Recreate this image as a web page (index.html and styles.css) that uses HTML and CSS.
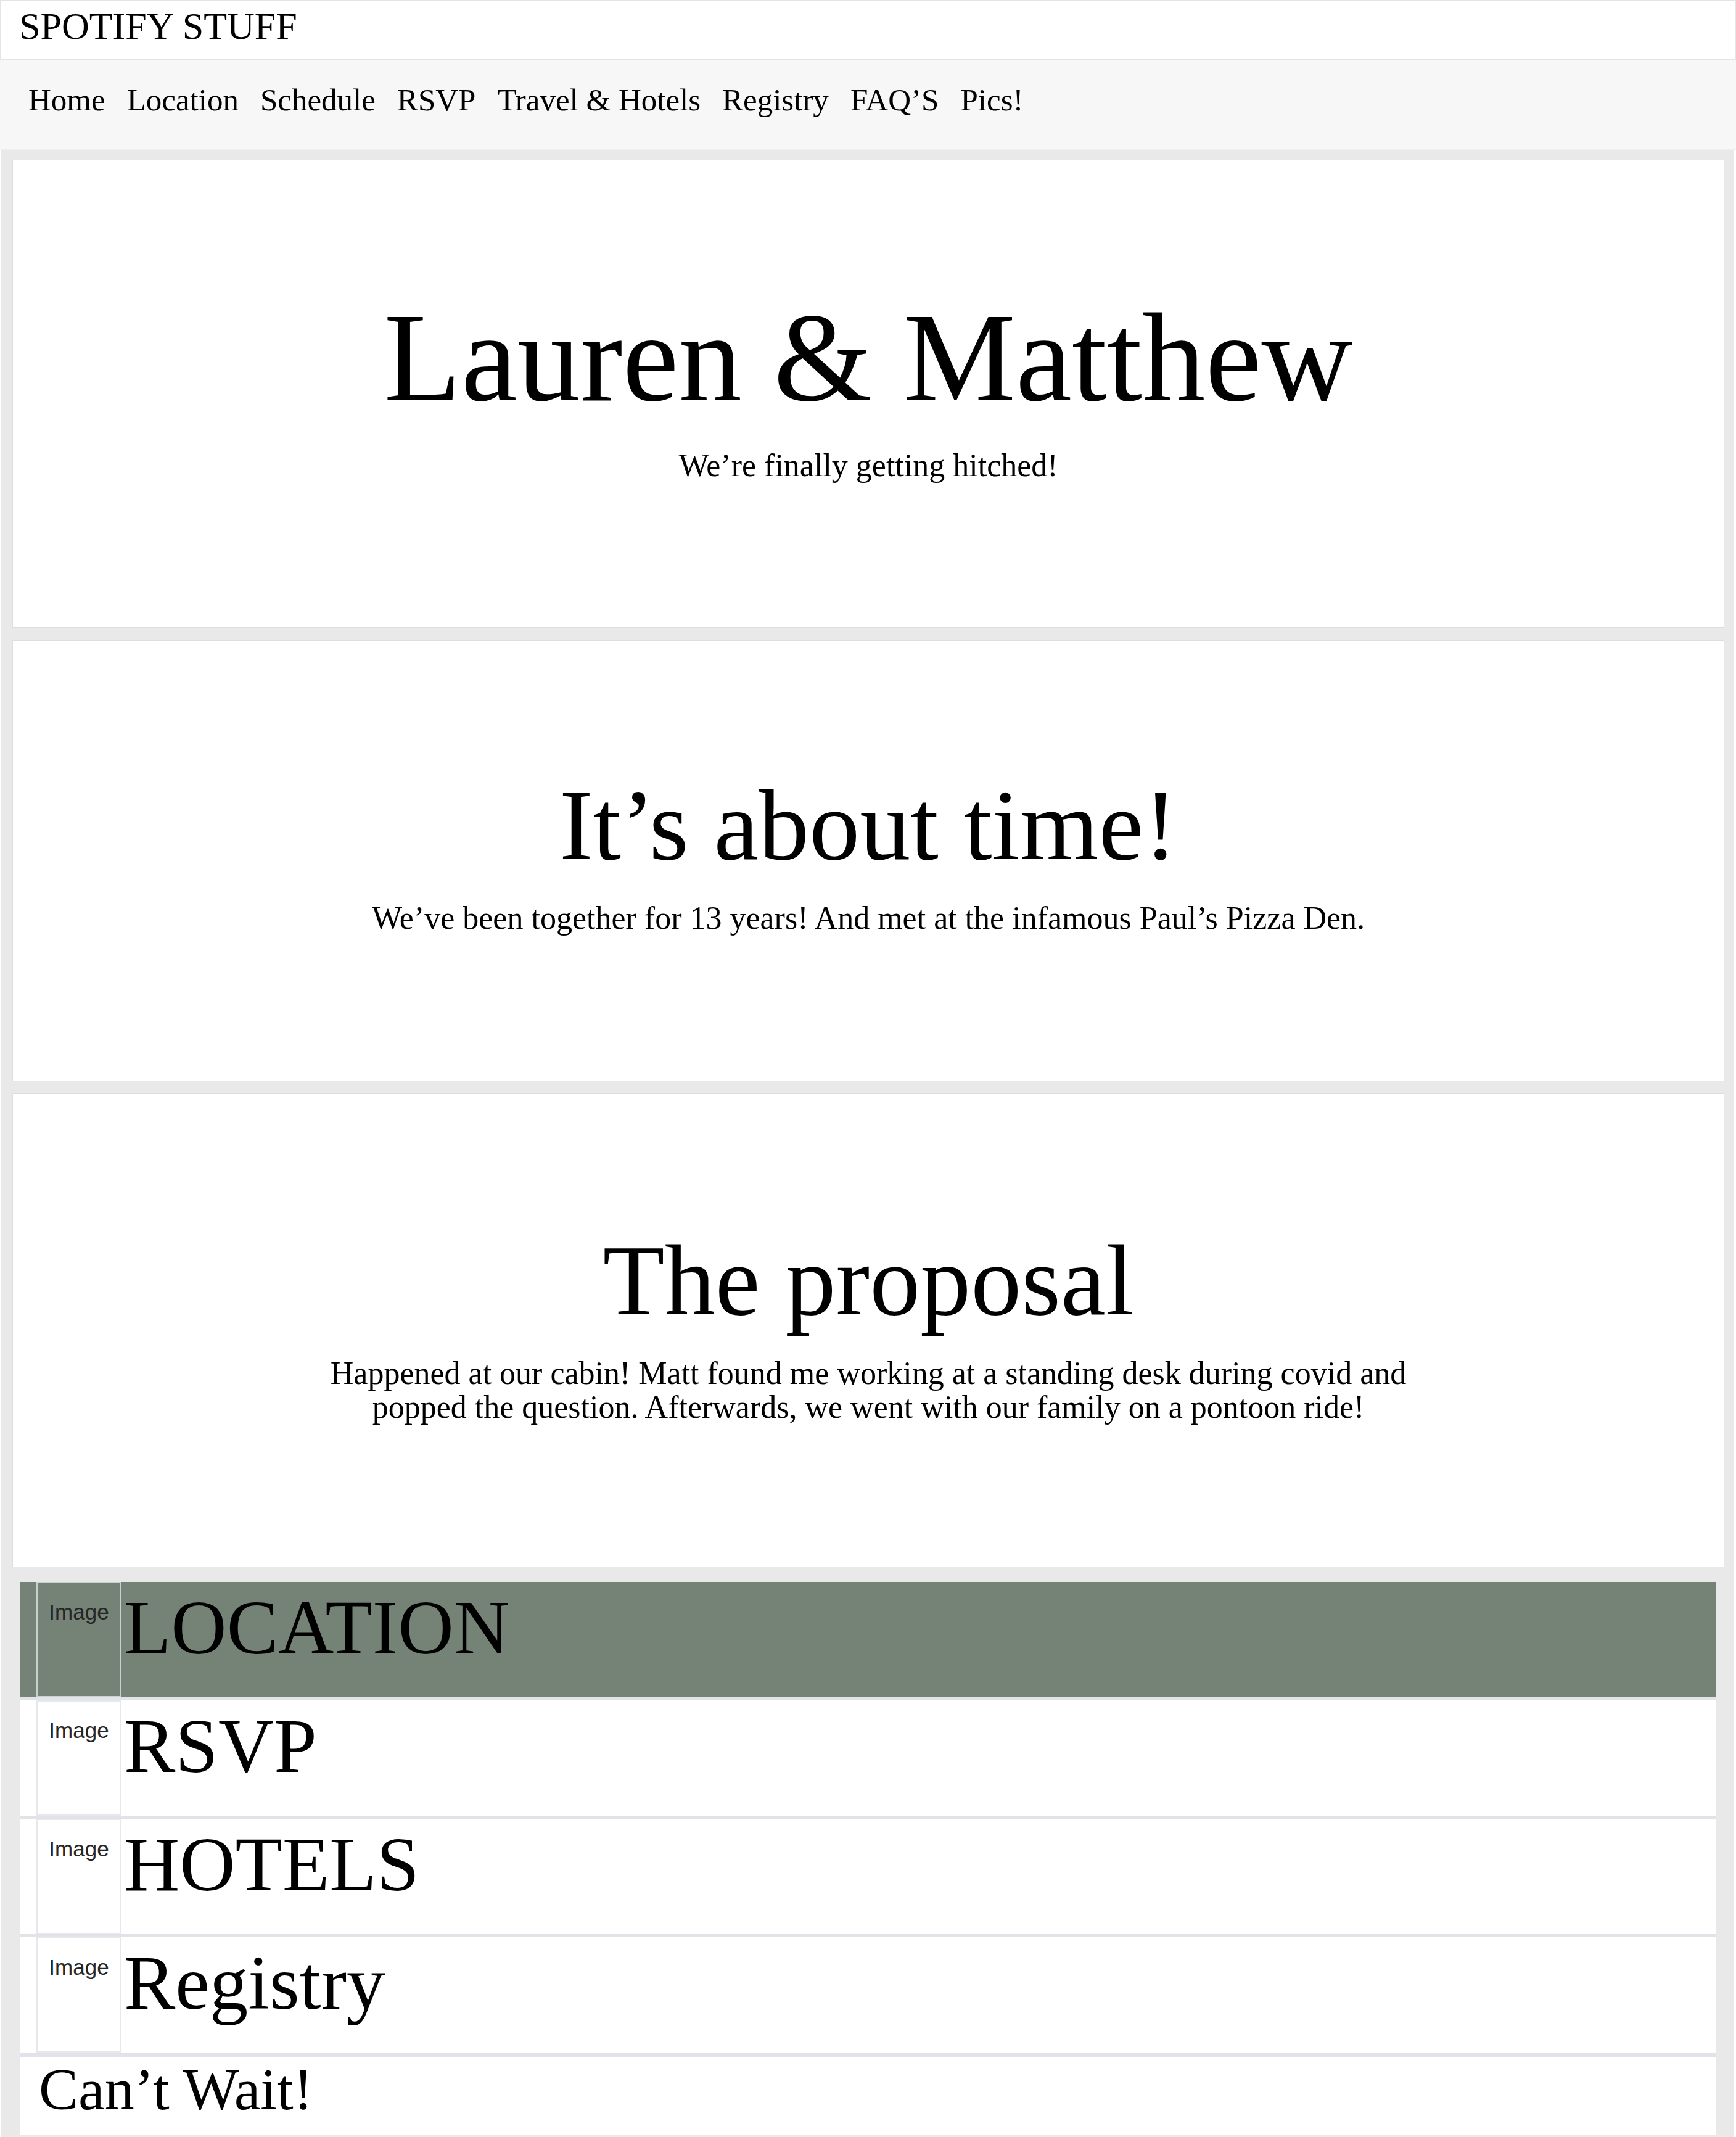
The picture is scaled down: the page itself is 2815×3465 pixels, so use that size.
FILE: index.html
```html
<!DOCTYPE html>
<html lang="en">
<head>
<meta charset="utf-8">
<title>Lauren &amp; Matthew</title>
<link rel="stylesheet" href="styles.css">
</head>
<body>
<header class="site-title">SPOTIFY STUFF</header>
<nav class="nav">
  <a class="nav-link" href="#">Home</a>
  <a class="nav-link" href="#">Location</a>
  <a class="nav-link" href="#">Schedule</a>
  <a class="nav-link" href="#">RSVP</a>
  <a class="nav-link" href="#">Travel &amp; Hotels</a>
  <a class="nav-link" href="#">Registry</a>
  <a class="nav-link" href="#">FAQ’S</a>
  <a class="nav-link" href="#">Pics!</a>
</nav>
<main class="page">
  <section class="card card-hero">
    <h1 class="hero-title">Lauren &amp; Matthew</h1>
    <p class="card-text">We’re finally getting hitched!</p>
  </section>
  <section class="card card-2">
    <h2 class="card-title">It’s about time!</h2>
    <p class="card-text">We’ve been together for 13 years! And met at the infamous Paul’s Pizza Den.</p>
  </section>
  <section class="card card-3">
    <h2 class="card-title">The proposal</h2>
    <p class="card-text narrow">Happened at our cabin! Matt found me working at a standing desk during covid and popped the question. Afterwards, we went with our family on a pontoon ride!</p>
  </section>
  <div class="list">
    <div class="row row-green">
      <div class="strip"></div>
      <div class="img-cell">Image</div>
      <div class="row-title">LOCATION</div>
    </div>
    <div class="row">
      <div class="strip"></div>
      <div class="img-cell">Image</div>
      <div class="row-title">RSVP</div>
    </div>
    <div class="row">
      <div class="strip"></div>
      <div class="img-cell">Image</div>
      <div class="row-title">HOTELS</div>
    </div>
    <div class="row">
      <div class="strip"></div>
      <div class="img-cell">Image</div>
      <div class="row-title">Registry</div>
    </div>
    <div class="footer-row">Can’t Wait!</div>
  </div>
</main>
</body>
</html>
```
FILE: styles.css
```css
* { box-sizing: border-box; }
html, body {
  margin: 0;
  padding: 0;
  background: #ffffff;
  color: #000;
  font-family: "Liberation Serif", "Times New Roman", serif;
}
.site-title {
  height: 97px;
  border: 2px solid #e4e4e4;
  padding: 5px 0 0 29px;
  font-size: 62px;
  line-height: 1.15;
  background: #fff;
}
.nav {
  height: 146px;
  background: #f7f7f7;
  display: flex;
  gap: 35px;
  padding: 36px 0 0 46px;
  border-bottom: 2px solid #efefef;
}
.nav-link {
  color: #000;
  text-decoration: none;
  font-size: 51px;
  line-height: 1.15;
}
.page {
  background: #e9e9e9;
  margin: 0 3px 0 2px;
  padding: 16px 16px 5px 18px;
  display: flex;
  flex-direction: column;
  gap: 20px;
}
.card {
  background: #fff;
  border: 1px solid #dedede;
  text-align: center;
  padding: 201px 40px 236px;
}
.card-hero { padding-top: 197px; padding-bottom: 235px; }
.card-3 { padding-top: 204px; padding-bottom: 231px; }
.hero-title {
  margin: 0;
  font-weight: normal;
  font-size: 205px;
  line-height: 1.2;
}
.card-title {
  margin: 0;
  font-weight: normal;
  font-size: 164px;
  line-height: 1.2;
}
.card-text {
  margin: 24px auto 0;
  font-size: 52px;
  line-height: 55px;
}
.narrow { max-width: 1820px; }
.list {
  margin: 4px 13px 0 12px;
  background: #e1e3e9;
  display: flex;
  flex-direction: column;
  gap: 5px;
}
.row {
  height: 187px;
  background: #fff;
  display: flex;
}
.row-green { background: #758276; }
.strip { width: 27px; flex: none; }
.img-cell {
  width: 138px;
  flex: none;
  border: 2px solid #e6e8ec;
  padding-top: 27px;
  text-align: center;
  font-family: "Liberation Sans", Arial, sans-serif;
  font-size: 35px;
  line-height: 1.15;
  color: #262626;
}
.row-green .img-cell { border-color: #c9d1cc; }
.row-title {
  padding: 12px 0 0 4px;
  font-size: 125px;
  line-height: 1;
}
.footer-row {
  margin-top: 2px;
  height: 127px;
  background: #fff;
  padding: 5px 0 0 31px;
  font-size: 96px;
  line-height: 1;
}
```
